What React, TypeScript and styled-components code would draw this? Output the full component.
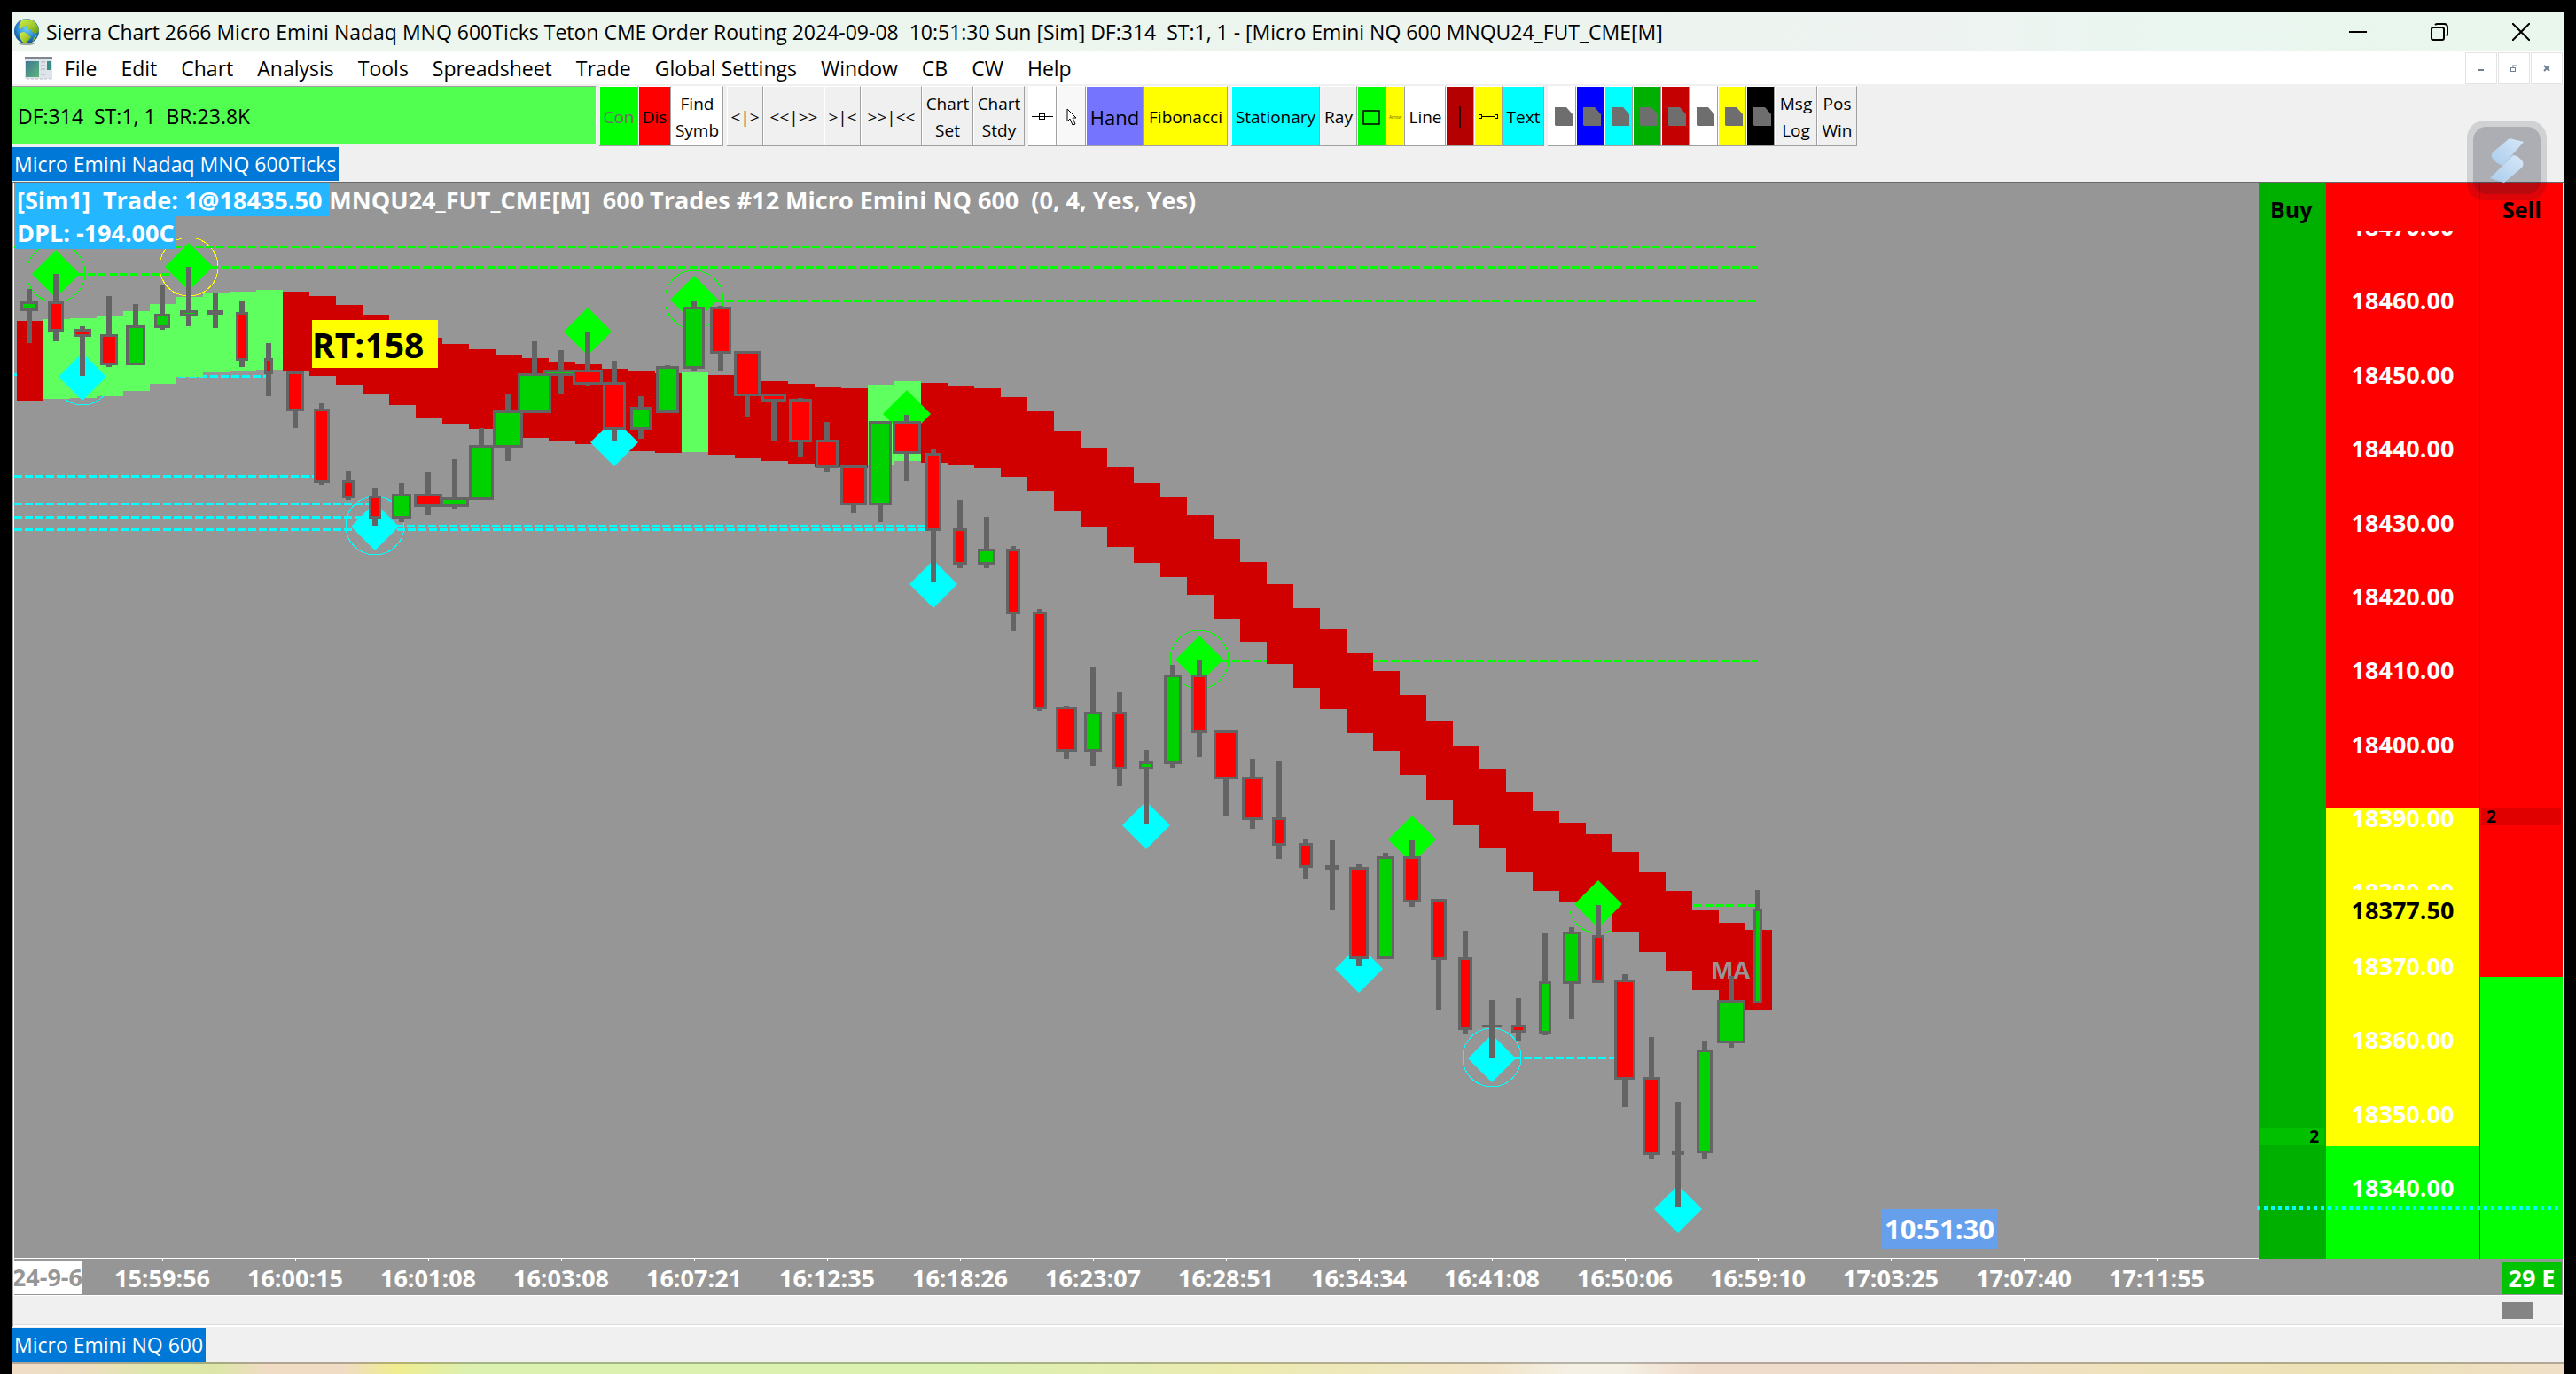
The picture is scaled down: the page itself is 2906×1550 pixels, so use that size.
import React from "react";
import styled, { createGlobalStyle } from "styled-components";

const GlobalStyle = createGlobalStyle`
  *, *::before, *::after { box-sizing: border-box; }
  html, body { margin: 0; padding: 0; background: #000; }
  body { font-family: "Open Sans", "Noto Sans", sans-serif; color: #000; }
  button { font-family: inherit; color: inherit; border: 0; padding: 0; margin: 0; background: none; white-space: nowrap; }
`;

/* ---------- window frame ---------- */

const Desktop = styled.div`
  display: flex;
  flex-direction: column;
  height: 100vh;
  padding: 13px 13px 0;
  background: #000;
`;

const AppWindow = styled.main`
  position: relative;
  flex: 1;
  min-height: 0;
  display: flex;
  flex-direction: column;
  background: #f0f0f0;
`;

const TitleBar = styled.header`
  display: flex;
  align-items: center;
  height: 45px;
  padding: 0 3px;
  background: linear-gradient(90deg, #ecf6ee 0%, #edf4ef 65%, #eef3f1 75%, #eaf6f0 85%, #e9f7ec 100%);
`;

const Title = styled.h1`
  flex: 1;
  margin: 0 0 0 7px;
  font-size: 23px;
  line-height: 32px;
  font-weight: 400;
  white-space: pre;
`;

const CaptionButton = styled.button`
  display: grid;
  place-items: center;
  width: 92px;
  height: 45px;
`;

const MenuBar = styled.nav`
  display: flex;
  align-items: center;
  height: 37px;
  padding-left: 15px;
  background: #fff;
`;

const MenuList = styled.div`
  flex: 1;
  display: flex;
  gap: 27px;
  margin-left: 14px;
`;

const MenuItem = styled.button`
  padding-top: 2px;
  font-size: 23px;
  line-height: 33px;
`;

const ChildButtons = styled.div`
  display: flex;
  gap: 1px;
  align-self: flex-end;
  margin-right: 2px;
`;

const ChildButton = styled.button`
  display: grid;
  place-items: center;
  width: 36px;
  height: 36px;
  border: 1px solid #e3e3e3;
  background: #fff;
`;

/* ---------- toolbar ---------- */

const Toolbar = styled.div`
  display: flex;
  align-items: flex-start;
  height: 70px;
  padding-top: 2px;
`;

const StatusCell = styled.div`
  display: flex;
  align-items: center;
  width: 660px;
  height: 66px;
  padding: 2px 0 0 6px;
  margin-right: 3px;
  border: 1px solid #a0a0a0;
  border-right-color: #fff;
  border-bottom-color: #fff;
  background: #50ff50;
  font-size: 23px;
  white-space: pre;
`;

const ToolGroup = styled.div`
  display: flex;
  margin-right: 4px;
  border-bottom: 1px solid #a0a0a0;
`;

const ToolButton = styled.button<{ $w: number; $bg?: string; $fg?: string; $size?: number }>`
  display: flex;
  flex-direction: column;
  align-items: center;
  justify-content: center;
  width: ${(p) => p.$w}px;
  height: 67px;
  padding-top: 2px;
  border-top: 1px solid #fff;
  border-right: 1px solid #a0a0a0;
  border-left: 1px solid #fff;
  background: ${(p) => p.$bg || "#f0f0f0"};
  color: ${(p) => p.$fg || "#000"};
  font-size: ${(p) => p.$size || 19}px;
  line-height: 30px;
`;

/* ---------- tabs ---------- */

const TabRow = styled.div<{ $h: number }>`
  display: flex;
  align-items: center;
  height: ${(p) => p.$h}px;
`;

const Tab = styled.button`
  height: 38px;
  padding: 0 3px;
  background: #0078d7;
  color: #fff;
  font-size: 23px;
  line-height: 38px;
`;

/* ---------- chart window ---------- */

const ChartWindow = styled.section`
  flex: 1;
  min-height: 0;
  display: flex;
  flex-direction: column;
  border-top: 2px solid #6a6a6a;
  border-left: 2px solid #a0a0a0;
  border-right: 2px solid #fff;
  background: #969696;
`;

const ChartBody = styled.div`
  flex: 1;
  min-height: 0;
  display: flex;
  position: relative;
`;

const Plot = styled.div`
  position: relative;
  flex: 1;
  min-width: 0;
  overflow: hidden;
  border-left: 1px solid #fff;
  border-bottom: 1px solid #fff;
`;

const PlotSvg = styled.svg`
  display: block;
  width: 100%;
  height: 100%;
`;

const Legend = styled.div`
  position: absolute;
  top: 0;
  left: 2px;
  display: flex;
  flex-direction: column;
  align-items: flex-start;
  font-size: 27px;
  font-weight: 700;
  color: #fff;
  white-space: pre;
`;

const LegendRow = styled.div`
  display: flex;
  line-height: 37px;
`;

const Highlight = styled.span`
  padding: 0 1px;
  background: #24b6ff;
`;

const Clock = styled.div`
  position: absolute;
  right: 295px;
  bottom: 10px;
  padding: 0 3px;
  background: #66a0ec;
  color: #fff;
  font-size: 31px;
  line-height: 45px;
  font-weight: 700;
`;

/* ---------- price ladder ---------- */

const Ladder = styled.div`
  position: relative;
  display: flex;
`;

const LadderColumn = styled.div<{ $w: number; $bg: string; $rule?: boolean }>`
  position: relative;
  width: ${(p) => p.$w}px;
  display: flex;
  flex-direction: column;
  background: ${(p) => p.$bg};
  border-left: ${(p) => (p.$rule ? "1px solid #d80000" : "0")};
`;

const LadderHead = styled.div<{ $right?: boolean }>`
  height: 54px;
  padding: 11px ${(p) => (p.$right ? 25 : 13)}px 0;
  text-align: ${(p) => (p.$right ? "right" : "left")};
  font-size: 25px;
  line-height: 36px;
  font-weight: 700;
`;

const PriceList = styled.div`
  position: relative;
  flex: 1;
  overflow: hidden;
`;

const PriceLabel = styled.span<{ $current?: boolean }>`
  position: absolute;
  left: 0;
  right: 0;
  transform: translateY(-50%);
  background: ${(p) => (p.$current ? "#ffff00" : "transparent")};
  color: ${(p) => (p.$current ? "#000" : "#fff")};
  text-align: center;
  font-size: 27px;
  line-height: 46px;
  font-weight: 700;
`;

const Depth = styled.span<{ $side: "buy" | "sell" }>`
  position: absolute;
  left: 1px;
  right: 2px;
  height: 20px;
  padding: 0 6px;
  background: ${(p) => (p.$side === "buy" ? "#00c000" : "#e00000")};
  text-align: ${(p) => (p.$side === "buy" ? "right" : "left")};
  font-size: 19px;
  line-height: 20px;
  font-weight: 700;
`;

const LowLine = styled.div`
  position: absolute;
  left: -2px;
  right: 5px;
  height: 4px;
  background: repeating-linear-gradient(90deg, #00ffff 0 4px, transparent 4px 8px);
`;

/* ---------- time axis, scroll bar, task bar ---------- */

const TimeAxis = styled.div`
  display: flex;
  align-items: stretch;
  height: 41px;
  border-left: 1px solid #fff;
  color: #fff;
  font-size: 27px;
  font-weight: 700;
  line-height: 39px;
`;

const DateCell = styled.div`
  display: flex;
  justify-content: flex-end;
  width: 77px;
  height: 37px;
  margin: 3px 15px 0 0;
  overflow: hidden;
  background: #fff;
  color: #969696;
  line-height: 36px;
  white-space: nowrap;
`;

const TimeCell = styled.div`
  width: 150px;
  display: flex;
  flex-direction: column;
  align-items: center;

  &::before {
    content: "";
    width: 1px;
    height: 3px;
    background: #fff;
  }
`;

const Countdown = styled.div`
  width: 68px;
  height: 36px;
  margin: 4px 1px 0 auto;
  background: #00c400;
  text-align: center;
  line-height: 36px;
`;

const ScrollTrack = styled.div`
  display: flex;
  justify-content: flex-end;
  align-items: center;
  height: 36px;
  padding-right: 34px;
  border-top: 1px solid #fff;
  border-bottom: 2px solid #fff;
  background: #f0f0f0;
  box-shadow: inset 0 -1px #dcdcdc;
`;

const ScrollThumb = styled.div`
  width: 34px;
  height: 19px;
  background: #848484;
`;

const TaskBar = styled.footer`
  height: 13px;
  border-top: 2px solid rgba(0, 0, 0, 0.25);
  background: linear-gradient(
    90deg,
    #f0ddc8 0%, #ecdfc0 3%, #dde8a8 6%, #dde6a8 8%, #f0dcc4 10%, #f0dcc4 13%, #f0ec90 15%,
    #dcf0b0 18%, #dcf0b0 38%, #ecebb0 48%, #f2e4c8 58%, #f4f0e4 61%, #f4f0e4 63%, #f0dccb 66%,
    #f0dccb 74%, #efe2bd 82%, #ece2b5 92%, #f0dfc8 100%
  );
  background-clip: border-box;
`;

const Launcher = styled.button`
  position: absolute;
  top: 123px;
  right: 20px;
  width: 90px;
  height: 90px;
  padding: 7px;
  border-radius: 20px;
  background: rgba(28, 32, 50, 0.15);
`;

const LauncherFace = styled.span`
  display: grid;
  place-items: center;
  height: 76px;
  border-radius: 15px;
  background: rgba(20, 28, 48, 0.19);
`;

/* ---------- data ---------- */

const FIRST_X = 33;
const STEP = 30;
const barX = (i: number) => FIRST_X + i * STEP;

// kind, half width, body top, body bottom, wick top, wick bottom
type Candle = ["g" | "r" | "d", number, number, number, number, number];
const CANDLES: Candle[] = [
  ["g", 10, 340, 351, 326, 387], ["r", 9, 340, 374, 309, 385], ["r", 10, 371, 380, 368, 424],
  ["r", 10, 377, 412, 334, 414], ["g", 11, 367, 412, 343, 412], ["g", 9, 354, 370, 322, 372],
  ["g", 10, 350, 357, 301, 368], ["d", 9, 350, 355, 330, 370], ["r", 7, 352, 407, 339, 414],
  ["r", 5, 404, 422, 387, 447], ["r", 10, 419, 464, 419, 483], ["r", 9, 461, 545, 455, 547],
  ["r", 7, 542, 562, 531, 564], ["r", 7, 559, 585, 551, 593], ["g", 11, 557, 585, 545, 589],
  ["r", 16, 557, 572, 533, 581], ["g", 16, 561, 572, 518, 574], ["g", 14, 502, 564, 483, 564],
  ["g", 17, 463, 505, 445, 520], ["g", 19, 421, 466, 385, 466], ["g", 20, 417, 424, 395, 445],
  ["r", 17, 417, 434, 374, 435], ["r", 13, 431, 485, 407, 497], ["g", 12, 459, 485, 447, 495],
  ["g", 13, 413, 466, 412, 466], ["g", 12, 346, 416, 339, 418], ["r", 12, 346, 399, 345, 418],
  ["r", 15, 396, 447, 396, 470], ["r", 14, 444, 453, 444, 497], ["r", 13, 450, 499, 449, 516],
  ["r", 13, 496, 528, 476, 533], ["r", 15, 525, 570, 525, 579], ["g", 13, 475, 570, 475, 589],
  ["r", 16, 475, 512, 468, 543], ["r", 9, 511, 599, 506, 656], ["r", 8, 596, 637, 564, 641],
  ["g", 10, 619, 637, 583, 641], ["r", 8, 619, 693, 616, 712], ["r", 8, 690, 800, 687, 802],
  ["r", 12, 797, 848, 796, 856], ["g", 10, 803, 848, 752, 864], ["r", 8, 803, 868, 781, 887],
  ["g", 8, 859, 868, 846, 929], ["g", 10, 761, 862, 750, 866], ["r", 9, 761, 827, 745, 854],
  ["r", 14, 824, 879, 823, 921], ["r", 12, 876, 925, 856, 935], ["r", 8, 922, 954, 858, 969],
  ["r", 8, 951, 979, 946, 992], ["d", 8, 976, 981, 948, 1027], ["r", 11, 978, 1082, 975, 1090],
  ["g", 10, 966, 1082, 962, 1082], ["r", 10, 966, 1018, 948, 1023], ["r", 9, 1014, 1083, 1014, 1139],
  ["r", 8, 1080, 1162, 1050, 1166], ["d", 11, 1156, 1159, 1128, 1193], ["r", 8, 1156, 1165, 1126, 1174],
  ["g", 7, 1107, 1166, 1052, 1168], ["g", 10, 1051, 1110, 1046, 1149], ["r", 7, 1055, 1109, 1021, 1109],
  ["r", 12, 1105, 1218, 1099, 1249], ["r", 10, 1215, 1303, 1170, 1308], ["d", 7, 1298, 1303, 1243, 1362],
  ["g", 9, 1184, 1301, 1174, 1308], ["g", 16, 1128, 1177, 1101, 1182], ["g", 5, 1025, 1132, 1004, 1132],
];

const BAND_HEIGHT = 90;
const BAND_TOPS = [
  362, 360, 359, 357, 351, 343, 335, 330, 329, 327, 329, 334, 344, 355, 367, 381, 388, 394, 400, 404, 408, 411,
  416, 419, 421, 420, 423, 427, 430, 433, 437, 438, 434, 430, 432, 435, 438, 448, 464, 486, 505, 527, 545, 561,
  581, 608, 634, 659, 686, 710, 737, 757, 784, 813, 841, 867, 894, 915, 928, 941, 961, 984, 1005, 1027, 1041, 1049,
];
const isUp = (i: number) => (i >= 1 && i <= 9) || i === 25 || i === 32 || i === 33;

const LIME = "#00ff00";
const AQUA = "#00ffff";

// from x, to x, y, colour
const LEVELS: [number, number, number, string][] = [
  [16, 1983, 278, LIME], [213, 1983, 301, LIME], [63, 213, 309, LIME], [783, 1983, 339, LIME],
  [1353, 1983, 745, LIME], [1803, 1983, 1021, LIME],
  [16, 63, 422, AQUA], [93, 303, 424, AQUA], [16, 363, 537, AQUA], [16, 423, 568, AQUA],
  [16, 423, 583, AQUA], [423, 1053, 593, AQUA], [16, 1053, 597, AQUA], [1683, 1833, 1193, AQUA],
];

const RINGS: [number, number, string][] = [
  [63, 308, LIME], [213, 301, "#ffff00"], [93, 424, AQUA], [423, 593, AQUA],
  [783, 338, LIME], [1353, 744, LIME], [1803, 1020, LIME], [1683, 1193, AQUA],
];

const PIVOTS: [number, number, string][] = [
  [63, 309, LIME], [213, 301, LIME], [663, 374, LIME], [783, 338, LIME], [1023, 467, LIME],
  [1353, 744, LIME], [1593, 947, LIME], [1803, 1020, LIME],
  [93, 425, AQUA], [423, 594, AQUA], [693, 499, AQUA], [1053, 659, AQUA], [1293, 931, AQUA],
  [1533, 1093, AQUA], [1683, 1194, AQUA], [1893, 1364, AQUA],
];

const TIMES = [
  "15:59:56", "16:00:15", "16:01:08", "16:03:08", "16:07:21", "16:12:35", "16:18:26", "16:23:07",
  "16:28:51", "16:34:34", "16:41:08", "16:50:06", "16:59:10", "17:03:25", "17:07:40", "17:11:55",
];

const PRICES = [18470, 18460, 18450, 18440, 18430, 18420, 18410, 18400, 18390, 18380, 18370, 18360, 18350, 18340];
const TOP_PRICE = 18469.4;
const PRICE_SPAN = 139;
const priceTop = (price: number) => `${((TOP_PRICE - price) / PRICE_SPAN) * 100}%`;

const MENUS = [
  "File", "Edit", "Chart", "Analysis", "Tools", "Spreadsheet", "Trade", "Global Settings", "Window", "CB", "CW", "Help",
];

/* ---------- icons ---------- */

const GlobeIcon = () => (
  <svg width="29" height="32" viewBox="0 0 29 32" aria-hidden="true">
    <defs>
      <radialGradient id="sea" cx="0.5" cy="0.4" r="0.6">
        <stop offset="0" stopColor="#6fd0f8" />
        <stop offset="0.6" stopColor="#2f8fd8" />
        <stop offset="1" stopColor="#0c4a94" />
      </radialGradient>
      <linearGradient id="land" x1="0" y1="0" x2="1" y2="1">
        <stop offset="0" stopColor="#d8ec50" />
        <stop offset="0.6" stopColor="#9cc828" />
        <stop offset="1" stopColor="#5c8c18" />
      </linearGradient>
    </defs>
    <ellipse cx="14" cy="29" rx="9" ry="2" fill="#9aa79c" />
    <circle cx="14" cy="15" r="14" fill="url(#sea)" />
    <path d="M8 3c4-2 10-2 14 1 3 3 6 7 6 11l-3 3-4-1-2-4-3 1-2-3-4-1-3 3-2-2 1-3z" fill="url(#land)" />
    <path d="M7 17l4-1 5 3 3 3-3 4-3 3c-4-1-6-4-6-7z" fill="url(#land)" />
    <path d="M23 21l3-2c-1 3-3 6-6 8z" fill="#8bbb30" />
    <path d="M12 9l4 1-2 2z" fill="#4fb4ee" />
  </svg>
);

const ChildIcon = () => (
  <svg width="31" height="26" viewBox="0 0 31 26" aria-hidden="true">
    <defs>
      <linearGradient id="pane" x1="0" y1="0" x2="1" y2="1">
        <stop offset="0" stopColor="#3f7794" />
        <stop offset="1" stopColor="#5fb47c" />
      </linearGradient>
    </defs>
    <rect width="31" height="25" fill="#dfe4ea" />
    <rect width="31" height="2" fill="#7e8894" />
    <rect x="1" y="5" width="15" height="18" fill="url(#pane)" />
    <path d="M18 6h5M18 10h5M18 14h5M18 20h5" stroke="#a8adb4" />
    <rect x="25" y="5" width="4" height="10" fill="#3d8b86" />
    <path d="M2 25h28" stroke="#b8bcc4" strokeDasharray="3 2" />
  </svg>
);

const PageSvg = styled.svg`
  margin-left: 4px;
`;

const PageIcon = () => (
  <PageSvg width="20" height="22" viewBox="0 0 20 22" aria-hidden="true">
    <path d="M0 0h13l7 8v13H1l-1-1z" fill="#6e6e6e" />
  </PageSvg>
);

const CrosshairIcon = () => (
  <svg width="24" height="22" viewBox="0 0 24 22" aria-hidden="true" shapeRendering="crispEdges">
    <path d="M0 10.5h24M11.5 0v22" stroke="#000" strokeWidth="1" />
    <rect x="8.5" y="7.5" width="6" height="6" fill="#fff" stroke="#000" />
    <path d="M11.5 8v6M9 10.5h6" stroke="#000" strokeWidth="1" />
  </svg>
);

const PointerIcon = () => (
  <svg width="12" height="20" viewBox="0 0 12 20" aria-hidden="true">
    <path d="M1 1v14l3-3 3 7 3-1-3-7h4z" fill="#fff" stroke="#000" />
  </svg>
);

/* ---------- chart drawing ---------- */

const CandleMark = ({ candle, index }: { candle: Candle; index: number }) => {
  const [kind, half, top, bottom, high, low] = candle;
  const x = barX(index);
  const inner = Math.max(bottom - top - 6, 1);
  return (
    <g fill="#646464">
      <rect x={x - 3} y={high} width={6} height={low - high} />
      <rect x={x - half} y={top} width={half * 2} height={bottom - top} rx={1} />
      {kind !== "d" && (
        <rect x={x - half + 3} y={top + 3} width={half * 2 - 6} height={inner} fill={kind === "g" ? "#00d200" : "#ff0000"} />
      )}
    </g>
  );
};

const CandleChart = () => (
  <PlotSvg viewBox="16 207 2532 1212" preserveAspectRatio="xMinYMin slice" role="img" aria-label="MNQU24 600 trades candlestick chart">
    {RINGS.map(([x, y, color]) => (
      <circle key={`r${x}`} cx={x} cy={y} r="33" fill="none" stroke={color} strokeWidth="1" shapeRendering="crispEdges" />
    ))}
    <g shapeRendering="crispEdges">
      {LEVELS.map(([x1, x2, y, color]) => (
        <line key={`l${y}`} x1={x1} x2={x2} y1={y + 0.5} y2={y + 0.5} stroke={color} strokeWidth="3" strokeDasharray="9 3" />
      ))}
      {BAND_TOPS.map((top, i) => (
        <rect key={i} x={barX(i) - 14} y={top} width={STEP} height={BAND_HEIGHT} fill={isUp(i) ? "#60ff60" : "#d00000"} />
      ))}
    </g>
    {PIVOTS.map(([x, y, color]) => (
      <path key={`p${x}`} d={`M${x} ${y - 27}l27 27l-27 27l-27 -27z`} fill={color} />
    ))}
    <text x="1930" y="1104" fontSize="27" fontWeight="700" fill="#969696">MA</text>
    <g shapeRendering="crispEdges">
      {CANDLES.map((candle, i) => (
        <CandleMark key={i} candle={candle} index={i} />
      ))}
    </g>
    <rect x="352" y="361" width="142" height="54" fill="#ffff00" />
    <text x="352" y="404" fontSize="39" fontWeight="700">RT:158</text>
  </PlotSvg>
);

/* ---------- page ---------- */

const App = () => (
  <Desktop>
    <GlobalStyle />
    <AppWindow>
      <TitleBar>
        <GlobeIcon />
        <Title>
          {"Sierra Chart 2666 Micro Emini Nadaq MNQ 600Ticks Teton CME Order Routing 2024-09-08  10:51:30 Sun [Sim] DF:314  ST:1, 1 - [Micro Emini NQ 600 MNQU24_FUT_CME[M]"}
        </Title>
        <CaptionButton aria-label="Minimize">
          <svg width="20" height="20" viewBox="0 0 20 20"><path d="M0 10h20" stroke="#000" strokeWidth="2" /></svg>
        </CaptionButton>
        <CaptionButton aria-label="Restore">
          <svg width="20" height="20" viewBox="0 0 20 20" fill="none" stroke="#000" strokeWidth="2">
            <rect x="1" y="5" width="14" height="14" rx="2" />
            <path d="M5 2q1-1 3-1h7q4 0 4 4v7q0 2-1 3" />
          </svg>
        </CaptionButton>
        <CaptionButton aria-label="Close">
          <svg width="20" height="20" viewBox="0 0 20 20"><path d="M0 0l20 20M20 0L0 20" stroke="#000" strokeWidth="2" /></svg>
        </CaptionButton>
      </TitleBar>

      <MenuBar>
        <ChildIcon />
        <MenuList>
          {MENUS.map((name) => (
            <MenuItem key={name}>{name}</MenuItem>
          ))}
        </MenuList>
        <ChildButtons>
          <ChildButton aria-label="Minimize chart">
            <svg width="8" height="8" viewBox="0 0 8 8"><path d="M1 6h6" stroke="#708090" strokeWidth="2" /></svg>
          </ChildButton>
          <ChildButton aria-label="Restore chart">
            <svg width="8" height="8" viewBox="0 0 8 8" fill="none" stroke="#708090">
              <rect x="0.5" y="3.5" width="5" height="4" />
              <path d="M2 1h6M7.500 1v5M3 1v2" />
            </svg>
          </ChildButton>
          <ChildButton aria-label="Close chart">
            <svg width="8" height="8" viewBox="0 0 8 8"><path d="M1 1l6 6M7 1L1 7" stroke="#708090" strokeWidth="2" /></svg>
          </ChildButton>
        </ChildButtons>
      </MenuBar>

      <Toolbar>
        <StatusCell>{"DF:314  ST:1, 1  BR:23.8K"}</StatusCell>
        <ToolGroup>
          <ToolButton $w={44} $bg="#00ff00" $fg="#6d6d6d" disabled>Con</ToolButton>
          <ToolButton $w={37} $bg="#ff0000">Dis</ToolButton>
          <ToolButton $w={59} $bg="#fff"><span>Find</span><span>Symb</span></ToolButton>
        </ToolGroup>
        <ToolGroup>
          <ToolButton $w={41}>&lt;|&gt;</ToolButton>
          <ToolButton $w={69}>&lt;&lt;|&gt;&gt;</ToolButton>
          <ToolButton $w={41}>&gt;|&lt;</ToolButton>
          <ToolButton $w={69}>&gt;&gt;|&lt;&lt;</ToolButton>
          <ToolButton $w={58}><span>Chart</span><span>Set</span></ToolButton>
          <ToolButton $w={58}><span>Chart</span><span>Stdy</span></ToolButton>
        </ToolGroup>
        <ToolGroup>
          <ToolButton $w={32} $bg="#fff" aria-label="Crosshair"><CrosshairIcon /></ToolButton>
          <ToolButton $w={33} $bg="#f8f8f8" aria-label="Pointer"><PointerIcon /></ToolButton>
          <ToolButton $w={65} $bg="#7474ff" $size={22}>Hand</ToolButton>
          <ToolButton $w={95} $bg="#ffff00">Fibonacci</ToolButton>
        </ToolGroup>
        <ToolGroup>
          <ToolButton $w={100} $bg="#00ffff">Stationary</ToolButton>
          <ToolButton $w={42}>Ray</ToolButton>
          <ToolButton $w={32} $bg="#00ff00" aria-label="Rectangle">
            <svg width="20" height="17" viewBox="0 0 20 17"><rect x="1" y="1" width="18" height="15" fill="none" stroke="#000" strokeWidth="1.500" /></svg>
          </ToolButton>
          <ToolButton $w={22} $bg="#ffff00" $fg="#6b5a00" $size={5}>Arrow</ToolButton>
          <ToolButton $w={46} $bg="#fff">Line</ToolButton>
          <ToolButton $w={32} $bg="#b40000" aria-label="Vertical line">
            <svg width="4" height="24" viewBox="0 0 4 24"><path d="M2 0v24" stroke="#000" strokeWidth="1.500" /></svg>
          </ToolButton>
          <ToolButton $w={32} $bg="#ffff00" aria-label="Segment">
            <svg width="22" height="8" viewBox="0 0 22 8" fill="none" stroke="#000">
              <path d="M4 3.500h14" />
              <rect x="0.500" y="1.500" width="3" height="4" />
              <rect x="18.500" y="1.500" width="3" height="4" />
            </svg>
          </ToolButton>
          <ToolButton $w={47} $bg="#00ffff">Text</ToolButton>
        </ToolGroup>
        <ToolGroup>
          {["#fff", "#0000ff", "#00ffff", "#00b000", "#c40000", "#fff", "#ffff00", "#000"].map((bg, i) => (
            <ToolButton key={i} $w={32} $bg={bg} aria-label={`Chartbook ${i + 1}`}><PageIcon /></ToolButton>
          ))}
          <ToolButton $w={48}><span>Msg</span><span>Log</span></ToolButton>
          <ToolButton $w={45}><span>Pos</span><span>Win</span></ToolButton>
        </ToolGroup>
      </Toolbar>

      <TabRow $h={40}>
        <Tab>Micro Emini Nadaq MNQ 600Ticks</Tab>
      </TabRow>

      <ChartWindow>
        <ChartBody>
          <Plot>
            <CandleChart />
            <Legend>
              <LegendRow>
                <Highlight>{"[Sim1]  Trade: 1@18435.50 "}</Highlight>
                <span>{"MNQU24_FUT_CME[M]  600 Trades #12 Micro Emini NQ 600  (0, 4, Yes, Yes)"}</span>
              </LegendRow>
              <LegendRow>
                <Highlight>DPL: -194.00C</Highlight>
              </LegendRow>
            </Legend>
            <Clock>10:51:30</Clock>
          </Plot>
          <Ladder>
            <LadderColumn $w={76} $bg="#00b000">
              <LadderHead>Buy</LadderHead>
              <PriceList>
                <Depth $side="buy" style={{ top: priceTop(18348.2) }}>2</Depth>
              </PriceList>
            </LadderColumn>
            <LadderColumn
              $w={173}
              $bg="linear-gradient(180deg, #ff0000 0 58.1%, #ffff00 58.1% 89.5%, #00ff00 89.5%)"
            >
              <LadderHead />
              <PriceList>
                {PRICES.map((price) => (
                  <PriceLabel key={price} style={{ top: priceTop(price) }}>{price.toFixed(2)}</PriceLabel>
                ))}
                <PriceLabel $current style={{ top: priceTop(18377.5) }}>18377.50</PriceLabel>
              </PriceList>
            </LadderColumn>
            <LadderColumn $w={94} $bg="linear-gradient(180deg, #ff0000 0 73.8%, #00ff00 73.8%)" $rule>
              <LadderHead $right>Sell</LadderHead>
              <PriceList>
                <Depth $side="sell" style={{ top: priceTop(18391.5) }}>2</Depth>
              </PriceList>
            </LadderColumn>
            <LowLine style={{ top: "95.1%" }} />
          </Ladder>
        </ChartBody>
        <TimeAxis>
          <DateCell>24-9-6</DateCell>
          {TIMES.map((time) => (
            <TimeCell key={time}>{time}</TimeCell>
          ))}
          <Countdown>29 E</Countdown>
        </TimeAxis>
        <ScrollTrack>
          <ScrollThumb />
        </ScrollTrack>
      </ChartWindow>

      <TabRow $h={40}>
        <Tab>Micro Emini NQ 600</Tab>
      </TabRow>
      <TaskBar />
      <Launcher aria-label="Launcher">
        <LauncherFace>
          <svg width="40" height="52" viewBox="0 0 40 52" aria-hidden="true">
            <defs>
              <linearGradient id="bolt" x1="0" y1="1" x2="1" y2="0">
                <stop offset="0" stopColor="#a8ccec" />
                <stop offset="1" stopColor="#d8e8f8" />
              </linearGradient>
            </defs>
            <path d="M23 1l16 4-23 26q-4 1-9-4-7-6-3-10z" fill="url(#bolt)" />
            <path d="M27 20q5 0 10 6 3 4 0 8L17 51 1 46z" fill="url(#bolt)" />
          </svg>
        </LauncherFace>
      </Launcher>
    </AppWindow>
  </Desktop>
);

export default App;
